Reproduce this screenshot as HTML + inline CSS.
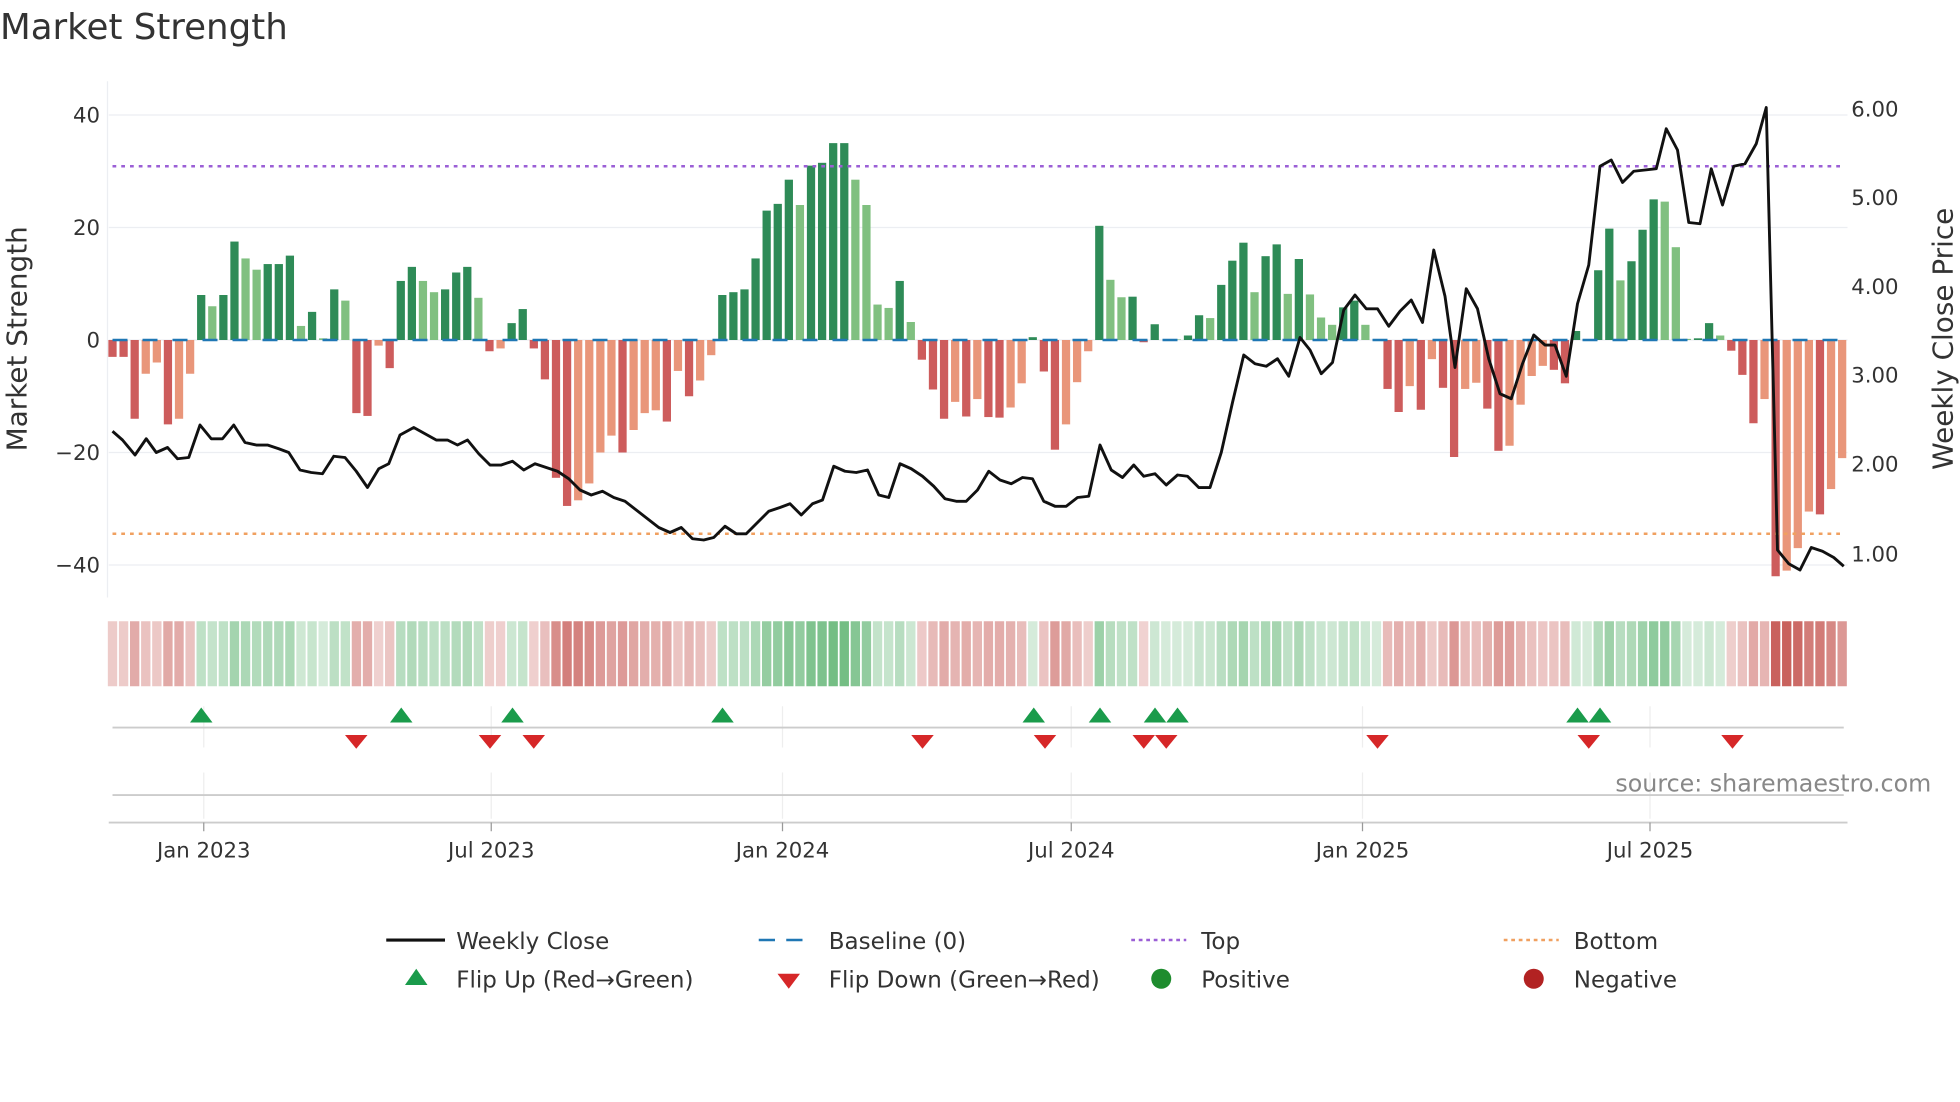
<!DOCTYPE html>
<html><head><meta charset="utf-8"><style>
html,body{margin:0;padding:0;background:#fff;width:1960px;height:1102px;overflow:hidden}
svg{display:block;font-family:"DejaVu Sans","Liberation Sans",sans-serif}
</style></head><body>
<svg id="s" width="1960" height="1102" viewBox="0 0 1568 881.6" xmlns="http://www.w3.org/2000/svg">
<rect width="1568" height="882" fill="#fff"/>
<text x="0" y="31" font-size="28.5" fill="#333">Market Strength</text>
<g stroke="#eceef2" stroke-width="1">
<line x1="87" y1="92" x2="1478" y2="92"/><line x1="87" y1="182" x2="1478" y2="182"/>
<line x1="87" y1="272" x2="1478" y2="272"/><line x1="87" y1="362" x2="1478" y2="362"/>
<line x1="87" y1="452" x2="1478" y2="452"/><line x1="86" y1="65" x2="86" y2="478"/>
</g>
<g font-size="17" fill="#333" text-anchor="end">
<text x="80" y="98">40</text><text x="80" y="188">20</text><text x="80" y="278">0</text><text x="80" y="368">−20</text><text x="80" y="458">−40</text>
</g>
<g font-size="17" fill="#333">
<text x="1481" y="93">6.00</text><text x="1481" y="164">5.00</text><text x="1481" y="235">4.00</text><text x="1481" y="306">3.00</text><text x="1481" y="377">2.00</text><text x="1481" y="449">1.00</text>
</g>
<text transform="translate(21,271) rotate(-90)" font-size="22.3" fill="#333" text-anchor="middle">Market Strength</text>
<text transform="translate(1562,271) rotate(-90)" font-size="22.3" fill="#333" text-anchor="middle">Weekly Close Price</text>
<g id="bars"></g>
<line x1="90" y1="272" x2="1475" y2="272" stroke="#1f77b4" stroke-width="2" stroke-dasharray="12,12"/>
<line x1="90" y1="133" x2="1475" y2="133" stroke="#9b5fd6" stroke-width="2" stroke-dasharray="3,4"/>
<line x1="90" y1="427" x2="1475" y2="427" stroke="#f0a060" stroke-width="2" stroke-dasharray="3,4"/>
<polyline id="price" fill="none" stroke="#111" stroke-width="2.3" stroke-linejoin="round"/>
<g id="strip"></g>
<g stroke="#eee" stroke-width="1">
<line x1="163" y1="565" x2="163" y2="598"/><line x1="393" y1="565" x2="393" y2="598"/><line x1="626" y1="565" x2="626" y2="598"/><line x1="857" y1="565" x2="857" y2="598"/><line x1="1090" y1="565" x2="1090" y2="598"/><line x1="1320" y1="565" x2="1320" y2="598"/>
<line x1="163" y1="618" x2="163" y2="655"/><line x1="393" y1="618" x2="393" y2="655"/><line x1="626" y1="618" x2="626" y2="655"/><line x1="857" y1="618" x2="857" y2="655"/><line x1="1090" y1="618" x2="1090" y2="655"/><line x1="1320" y1="618" x2="1320" y2="655"/>
</g>
<line x1="90" y1="582" x2="1475" y2="582" stroke="#ccc" stroke-width="1.5"/>
<line x1="90" y1="636" x2="1475" y2="636" stroke="#ccc" stroke-width="1.5"/>
<line x1="87" y1="658" x2="1478" y2="658" stroke="#ccc" stroke-width="1.5"/>
<g stroke="#999" stroke-width="1">
<line x1="163" y1="658" x2="163" y2="665"/><line x1="393" y1="658" x2="393" y2="665"/><line x1="626" y1="658" x2="626" y2="665"/><line x1="857" y1="658" x2="857" y2="665"/><line x1="1090" y1="658" x2="1090" y2="665"/><line x1="1320" y1="658" x2="1320" y2="665"/>
</g>
<g id="marks"></g>
<text x="1545" y="633" font-size="19" fill="#888" text-anchor="end">source: sharemaestro.com</text>
<g font-size="17" fill="#333" text-anchor="middle">
<text x="163" y="686">Jan 2023</text><text x="393" y="686">Jul 2023</text><text x="626" y="686">Jan 2024</text><text x="857" y="686">Jul 2024</text><text x="1090" y="686">Jan 2025</text><text x="1320" y="686">Jul 2025</text>
</g>
<g font-size="18.4" fill="#333">
<line x1="309" y1="752" x2="356" y2="752" stroke="#111" stroke-width="2.5"/><text x="365" y="759">Weekly Close</text>
<line x1="607" y1="752" x2="651" y2="752" stroke="#1f77b4" stroke-width="2" stroke-dasharray="13,9"/><text x="663" y="759">Baseline (0)</text>
<line x1="905" y1="752" x2="949" y2="752" stroke="#9b5fd6" stroke-width="2" stroke-dasharray="3,3"/><text x="961" y="759">Top</text>
<line x1="1203" y1="752" x2="1247" y2="752" stroke="#f0a060" stroke-width="2" stroke-dasharray="3,3"/><text x="1259" y="759">Bottom</text>
<polygon points="324,788 333,775 342,788" fill="#1a9b4b"/><text x="365" y="790">Flip Up (Red→Green)</text>
<polygon points="622,779 640,779 631,791" fill="#d62728"/><text x="663" y="790">Flip Down (Green→Red)</text>
<circle cx="929" cy="783" r="8" fill="#1e8c2e"/><text x="961" y="790">Positive</text>
<circle cx="1227" cy="783" r="8" fill="#b22222"/><text x="1259" y="790">Negative</text>
</g>
</svg>
<script>
var V=("-3d -3d -14d -6l -4l -15d -14l -6l 8d 6l 8d 17.5d 14.5l 12.5l 13.5d 13.5d 15d 2.5l 5d 0.3l 9d 7l -13d -13.5d -1l -5d 10.5d 13d 10.5l 8.5l 9d 12d 13d 7.5l -2d -1.5l 3d 5.5d -1.5d -7d -24.5d -29.5d -28.5l -25.5l -20l -17l -20d -16l -13l -12.5l -14.5d -5.5l "+
"-10d -7.2l -2.7l 8d 8.5d 9d 14.5d 23d 24.2d 28.5d 24l 31d 31.5d 35d 35d 28.5l 24l 6.3l 5.7l 10.5d 3.2l -3.5d -8.8d -14d -11l -13.6d -10.5l -13.7d -13.8d -12l -7.7l 0.5d -5.6d -19.5d -15l -7.5l -2l 20.3d 10.7l 7.6l 7.7d -0.4d 2.8d 0 0.1l 0.8d 4.4d 3.9l 9.8d 14.1d 17.3d 8.5l 14.9d "+
"17d 8.2l 14.4d 8.1l 4l 2.7l 5.8d 7d 2.7l 0 -8.7d -12.8d -8.2l -12.4d -3.4l -8.5d -20.8d -8.7l -7.6l -12.2d -19.7d -18.8l -11.5l -6.4l -4.6l -5.3d -7.7d 1.6d 0 12.4d 19.8d 10.6l 14d 19.6d 25d 24.6l 16.5l 0.2l 0.3d 3d 0.8l -1.9d -6.2d -14.8d -10.5l -42d -41l -37l -30.5l -31d -26.5l -21l").split(" ");
var NS="http://www.w3.org/2000/svg",n=V.length,x0=90,st=8.87;
var bars=document.getElementById("bars"),strip=document.getElementById("strip");
function el(t,a,p){var e=document.createElementNS(NS,t);for(var k in a)e.setAttribute(k,a[k]);p.appendChild(e);return e}
function mix(c,t){var w=[255,255,255];return "rgb("+c.map(function(v,i){return Math.round(w[i]+(v-w[i])*t)}).join(",")+")"}
var bw=6.6;
for(var i=0;i<n;i++){var s=V[i],v=parseFloat(s),f=s.slice(-1),x=x0+i*st;
 if(v!==0){var col=v>0?(f=="d"?"#2e8b57":"#80c080"):(f=="d"?"#cd5c5c":"#e9967a");
  var y=272-v*4.5;el("rect",{x:x-bw/2,y:Math.min(y,272),width:bw,height:Math.abs(v*4.5),fill:col},bars);}
 var t=0.25+Math.min(Math.abs(v)/40,1)*0.65;
 var c=v>=0?mix([85,175,105],v<1?0.25:t):mix([195,80,75],t);
 el("rect",{x:x-st/2+0.7,y:497,width:st-1.4,height:52,fill:c},strip);}
var P="90,345 98,352 108,364 117,351 125,362 134,358 142,367 151,366 160,340 169,351 178,351 187,340 196,354 205,356 214,356 223,359 231,362 240,376 249,378 258,379 267,365 276,366 285,377 294,390 303,375 311,371 320,348 331,342 340,347 349,352 358,352 366,356 374,352 383,363 392,372 401,372 410,369 419,376 428,371 437,374 446,377 455,383 464,392 473,396 482,393 491,398 500,401 509,408 518,415 527,422 536,426 545,422 554,431 563,432 571,430 580,421 589,427 597,427 606,418 615,409 624,406 632,403 641,412 650,403 658,400 667,373 676,377 685,378 694,376 703,396 711,398 720,371 729,375 738,381 747,389 756,399 765,401 773,401 782,392 791,377 800,384 809,387 818,382 826,383 835,401 844,405 853,405 862,398 871,397 880,356 889,376 898,382 907,372 915,381 924,379 933,388 942,380 950,381 959,390 968,390 977,362 986,322 995,284 1004,291 1013,293 1022,287 1031,301 1040,270 1048,280 1057,299 1066,290 1075,248 1084,236 1093,247 1102,247 1111,261 1120,249 1129,240 1138,258 1147,200 1156,237 1164,294 1173,231 1182,247 1191,287 1200,315 1209,319 1218,291 1227,268 1236,276 1244,276 1253,301 1262,243 1271,212 1280,133 1289,128 1298,146 1307,137 1316,136 1325,135 1333,103 1342,120 1351,178 1360,179 1369,135 1378,164 1387,133 1396,131 1405,115 1413,86 1422,440 1431,451 1440,456 1449,438 1458,441 1467,446 1475,453";
document.getElementById("price").setAttribute("points",P);
var m=document.getElementById("marks");
[161,321,410,578,827,880,924,942,1262,1280].forEach(function(x){el("polygon",{points:(x-9)+",578 "+x+",566 "+(x+9)+",578",fill:"#1a9b4b"},m)});
[285,392,427,738,836,915,933,1102,1271,1386].forEach(function(x){el("polygon",{points:(x-9)+",588 "+(x+9)+",588 "+x+",599",fill:"#d62728"},m)});
</script>
</body></html>
